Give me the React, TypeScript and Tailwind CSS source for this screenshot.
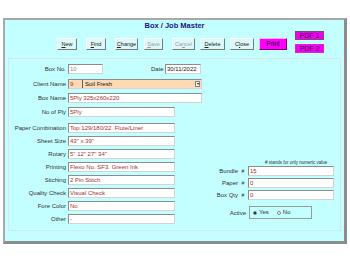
import React from 'react';

const font = { fontFamily: '"Liberation Sans", Arial, sans-serif' };

const buttons = [
  { label: 'New', key: 0, w: 'w-[20px]', ml: 'ml-0' },
  { label: 'Find', key: 0, w: 'w-[20px]', ml: 'ml-[9px]' },
  { label: 'Change', key: 0, w: 'w-[23px]', ml: 'ml-[9px]' },
  { label: 'Save', key: 0, w: 'w-[19px]', ml: 'ml-[6px]', disabled: true },
  { label: 'Cancel', key: 2, w: 'w-[23px]', ml: 'ml-[9px]', disabled: true },
  { label: 'Delete', key: 0, w: 'w-[25px]', ml: 'ml-[5px]' },
  { label: 'Close', key: 1, w: 'w-[24px]', ml: 'ml-[5px]' },
];

const longRows = [
  { label: 'No of Ply', value: '5Ply' },
  { label: 'Paper Combination', value: 'Top 129/180/22. Flute/Liner' },
  { label: 'Sheet Size', value: '43" x 39"' },
  { label: 'Rotary', value: '5" 12" 27" 34"' },
  { label: 'Printing', value: 'Flexo No. SF3. Green Ink' },
  { label: 'Stiching', value: '2 Pin Stitch' },
  { label: 'Quality Check', value: 'Visual Check' },
  { label: 'Fore Color', value: 'No' },
  { label: 'Other', value: '-' },
];

const numericRows = [
  { label: 'Bundle', value: '15' },
  { label: 'Paper', value: '0' },
  { label: 'Box Qty', value: '0' },
];

function Field({ value, className, muted }: { value: string; className: string; muted?: boolean }) {
  return (
    <div
      className={`h-[10px] bg-white border border-[#8c8c8c] border-b-[#d4d4d4] border-r-[#d4d4d4] pl-[1px] text-[6px] leading-[8px] whitespace-nowrap overflow-hidden ${muted ? 'text-[#8a8a8a]' : 'text-[#9b3434]'} ${className}`}
    >
      {value}
    </div>
  );
}

function Label({ text }: { text: string }) {
  return <div className="w-[57px] mr-[2px] text-right text-[6px] leading-[10px] text-[#303030] whitespace-nowrap">{text}</div>;
}

export default function App() {
  return (
    <div className="w-[350px] h-[263px] bg-white pt-[18px] pl-[3px]" style={font}>
      <div className="w-[344px] h-[226px] bg-[#c4ffff] border-2 border-[#a8a8a8] border-r-[3px] border-b-[3px] border-r-[#8c8c8c] border-b-[#8c8c8c] flex flex-col">
        {/* header */}
        <div className="h-[38px] flex flex-col">
          <div className="mt-[1px] h-[9px] text-center text-[7.5px] leading-[9px] font-bold text-[#14148c]">
            Box / Job Master
          </div>
          <div className="flex items-start pl-[52px]">
            <div className="mt-[8px] flex">
              {buttons.map(b => (
                <div
                  key={b.label}
                  className={`${b.w} ${b.ml} h-[12px] bg-[#dcf8f8] border border-white border-r-[#7a7a7a] border-b-[#7a7a7a] flex items-center justify-center text-[5.5px] ${b.disabled ? 'text-[#a0a0a0]' : 'text-[#202020]'}`}
                >
                  {b.label.slice(0, b.key)}
                  <span className="underline">{b.label[b.key]}</span>
                  {b.label.slice(b.key + 1)}
                </div>
              ))}
              <div className="w-[28px] ml-[5px] h-[12px] bg-[#ff00ff] border border-[#ffb0ff] border-r-[#7a007a] border-b-[#7a007a] flex items-center justify-center text-[6.5px] text-black">
                Print
              </div>
            </div>
            <div className="ml-[8px] mt-[1px] flex flex-col gap-[4px]">
              <div className="w-[29px] h-[9px] bg-[#f000f0] border border-[#705070] flex items-center justify-center text-[7px] leading-[7px] text-[#3a003a]">PDF 1</div>
              <div className="w-[29px] h-[9px] bg-[#f000f0] border border-[#e020e0] flex items-center justify-center text-[7px] leading-[7px] text-[#3a003a]">PDF 2</div>
            </div>
          </div>
        </div>

        {/* form panel */}
        <div className="mx-[3px] h-[173px] border border-[#d6e6e6] flex">
          <div className="pt-[5px] flex flex-col">
            <div className="flex items-center h-[10px]">
              <Label text="Box No." />
              <Field value="10" className="w-[35px]" muted />
              <div className="ml-[48px] w-[14px] text-[6px] leading-[10px] text-[#303030]">Date</div>
              <Field value="30/11/2022" className="w-[36px] !text-[#202020]" />
            </div>
            <div className="flex items-center h-[10px] mt-[5px]">
              <Label text="Client Name" />
              <div className="w-[134px] h-[10px] bg-[#ffd9b4] border border-[#8c8c8c] border-b-[#d4d4d4] border-r-[#d4d4d4] flex items-center text-[6px] leading-[8px]">
                <span className="w-[13px] pl-[1px] text-[#9b3434]">9</span>
                <span className="h-[8px] border-l border-[#606060] pl-[2px] text-[#101010] flex-1">Soil Fresh</span>
                <span className="w-[5px] h-[6px] mr-[1px] bg-white border border-[#808080] flex items-center justify-center text-[4px] leading-[4px] text-black">▾</span>
              </div>
            </div>
            <div className="flex items-center h-[10px] mt-[4px]">
              <Label text="Box Name" />
              <Field value="5Ply 325x260x220" className="w-[134px]" />
            </div>
            {longRows.map((r, i) => (
              <div key={r.label} className={`flex items-center h-[10px] ${i === 0 ? 'mt-[4px]' : i === 1 ? 'mt-[6px]' : 'mt-[3px]'}`}>
                <Label text={r.label} />
                <Field value={r.value} className="w-[107px]" />
              </div>
            ))}
          </div>

          <div className="pt-[100px] flex flex-col">
            <div className="pl-[63px] h-[7px] text-[4.5px] leading-[7px] text-[#303030] whitespace-nowrap"># stands for only numeric value</div>
            {numericRows.map((r, i) => (
              <div key={r.label} className={`flex items-center h-[10px] ${i === 0 ? 'mt-[0px]' : 'mt-[2px]'}`}>
                <div className="w-[36px] text-right text-[6px] leading-[10px] text-[#303030]">{r.label}</div>
                <div className="w-[10px] text-center text-[5px] leading-[10px] text-[#303030]">#</div>
                <Field value={r.value} className="w-[86px]" />
              </div>
            ))}
            <div className="flex items-center mt-[6px]">
              <div className="w-[44px] text-right text-[6px] leading-[10px] text-[#303030]">Active</div>
              <div className="ml-[3px] w-[63px] h-[13px] border border-[#9a9a9a] flex items-center text-[6px] text-[#303030]">
                <span className="ml-[3px] w-[4px] h-[4px] rounded-full border border-[#808080] bg-white flex items-center justify-center">
                  <span className="w-[2px] h-[2px] rounded-full bg-black" />
                </span>
                <span className="ml-[2px]">Yes</span>
                <span className="ml-[8px] w-[4px] h-[4px] rounded-full border border-[#808080] bg-white" />
                <span className="ml-[2px]">No</span>
              </div>
            </div>
          </div>
        </div>
      </div>
    </div>
  );
}
